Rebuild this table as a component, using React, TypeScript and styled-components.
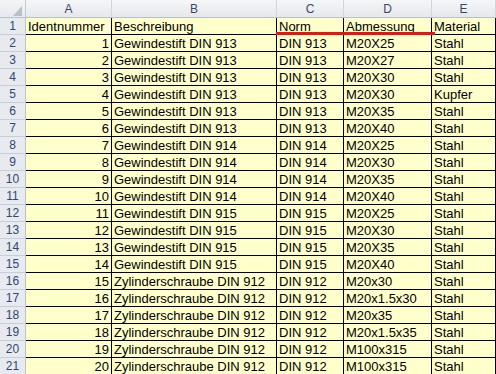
import styled, { createGlobalStyle } from 'styled-components'

const GlobalStyle = createGlobalStyle`
  html, body {
    margin: 0;
    padding: 0;
    overflow: hidden;
    background: #ffffff;
  }
`

type Row = [number, string, string, string, string]

const rows: Row[] = [
  [1, 'Gewindestift DIN 913', 'DIN 913', 'M20X25', 'Stahl'],
  [2, 'Gewindestift DIN 913', 'DIN 913', 'M20X27', 'Stahl'],
  [3, 'Gewindestift DIN 913', 'DIN 913', 'M20X30', 'Stahl'],
  [4, 'Gewindestift DIN 913', 'DIN 913', 'M20X30', 'Kupfer'],
  [5, 'Gewindestift DIN 913', 'DIN 913', 'M20X35', 'Stahl'],
  [6, 'Gewindestift DIN 913', 'DIN 913', 'M20X40', 'Stahl'],
  [7, 'Gewindestift DIN 914', 'DIN 914', 'M20X25', 'Stahl'],
  [8, 'Gewindestift DIN 914', 'DIN 914', 'M20X30', 'Stahl'],
  [9, 'Gewindestift DIN 914', 'DIN 914', 'M20X35', 'Stahl'],
  [10, 'Gewindestift DIN 914', 'DIN 914', 'M20X40', 'Stahl'],
  [11, 'Gewindestift DIN 915', 'DIN 915', 'M20X25', 'Stahl'],
  [12, 'Gewindestift DIN 915', 'DIN 915', 'M20X30', 'Stahl'],
  [13, 'Gewindestift DIN 915', 'DIN 915', 'M20X35', 'Stahl'],
  [14, 'Gewindestift DIN 915', 'DIN 915', 'M20X40', 'Stahl'],
  [15, 'Zylinderschraube DIN 912', 'DIN 912', 'M20x30', 'Stahl'],
  [16, 'Zylinderschraube DIN 912', 'DIN 912', 'M20x1.5x30', 'Stahl'],
  [17, 'Zylinderschraube DIN 912', 'DIN 912', 'M20x35', 'Stahl'],
  [18, 'Zylinderschraube DIN 912', 'DIN 912', 'M20x1.5x35', 'Stahl'],
  [19, 'Zylinderschraube DIN 912', 'DIN 912', 'M100x315', 'Stahl'],
  [20, 'Zylinderschraube DIN 912', 'DIN 912', 'M100x315', 'Stahl'],
]

const headers = ['Identnummer', 'Beschreibung', 'Norm', 'Abmessung', 'Material']
const letters = ['A', 'B', 'C', 'D', 'E']

export default function App() {
  return (
    <>
      <GlobalStyle />
      <Sheet>
        <Corner>
          <SelectAll />
        </Corner>
        {letters.map((l) => (
          <ColHead key={l}>{l}</ColHead>
        ))}

        <RowHead>1</RowHead>
        {headers.map((h, i) => (
          <Cell key={h} marked={i === 2 ? 'first' : i === 3 ? 'last' : undefined}>
            {h}
          </Cell>
        ))}

        {rows.map((r, idx) => (
          <RowGroup key={idx}>
            <RowHead>{idx + 2}</RowHead>
            <Cell align="right">{r[0]}</Cell>
            <Cell>{r[1]}</Cell>
            <Cell>{r[2]}</Cell>
            <Cell>{r[3]}</Cell>
            <Cell>{r[4]}</Cell>
          </RowGroup>
        ))}
      </Sheet>
    </>
  )
}

const Sheet = styled.div`
  display: grid;
  grid-template-columns: 26px 86px 165px 67px 88px 1fr;
  grid-template-rows: 18px;
  grid-auto-rows: 17px;
  width: 496px;
  height: 374px;
  overflow: hidden;
  font-family: 'Liberation Sans', Arial, sans-serif;
`

const RowGroup = styled.div`
  display: contents;
`

const Corner = styled.div`
  position: relative;
  box-sizing: border-box;
  background: linear-gradient(#f4f5f7, #e6e9ed);
  border-right: 1px solid #c4cad4;
  border-bottom: 1px solid #b9c1cd;
`

const SelectAll = styled.div`
  position: absolute;
  right: 3px;
  bottom: 1px;
  width: 0;
  height: 0;
  border-left: 9px solid transparent;
  border-bottom: 10px solid #b9bfc8;
`

const ColHead = styled.div`
  box-sizing: border-box;
  background: linear-gradient(#f5f6f8, #e5e8ec);
  border-right: 1px solid #d0d5dc;
  border-bottom: 1px solid #b9c1cd;
  color: #3b4861;
  font-size: 12px;
  line-height: 19px;
  text-align: center;
`

const RowHead = styled.div`
  box-sizing: border-box;
  background: #e7eaef;
  border-right: 1px solid #b9c1cd;
  border-bottom: 1px solid #c8ced8;
  color: #2f4873;
  font-size: 12px;
  line-height: 17px;
  text-align: center;
`

const Cell = styled.div<{ align?: 'left' | 'right'; marked?: 'first' | 'last' }>`
  position: relative;
  box-sizing: border-box;
  background: #ffffcc;
  border-right: 1px solid #000;
  border-bottom: 1px solid #000;
  color: #000;
  font-size: 13px;
  line-height: 17px;
  padding: 0 2px;
  white-space: nowrap;
  overflow: visible;
  text-align: ${(p) => p.align ?? 'left'};

  ${(p) =>
    p.marked &&
    `
    &::after {
      content: '';
      position: absolute;
      left: -1px;
      right: ${p.marked === 'last' ? '-4px' : '0'};
      bottom: -1px;
      height: 3px;
      background: #ee1111;
      z-index: 2;
    }
  `}
`
